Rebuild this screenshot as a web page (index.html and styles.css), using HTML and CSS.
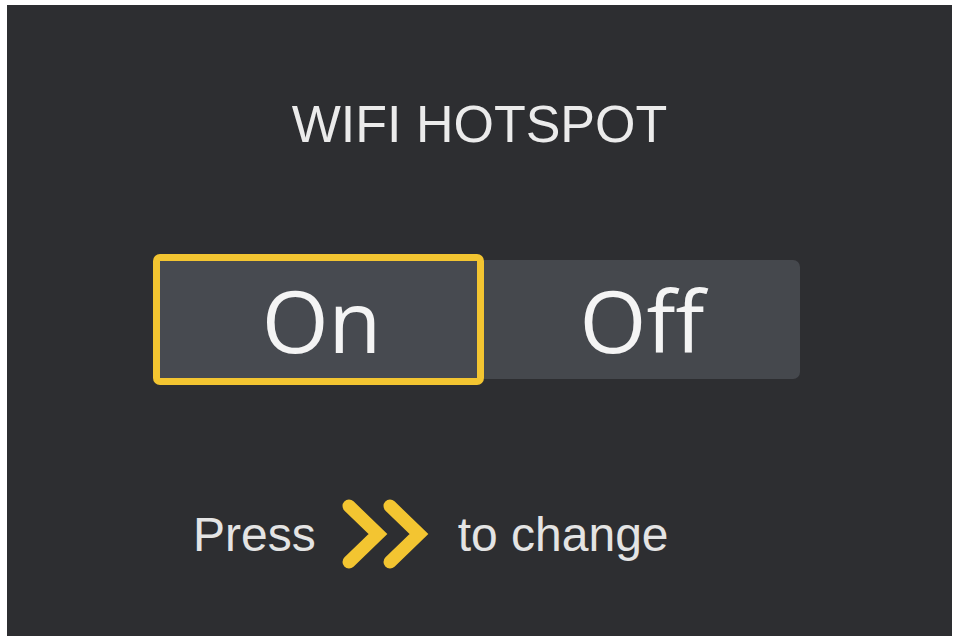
FILE: index.html
```html
<!DOCTYPE html>
<html lang="en">
<head>
<meta charset="utf-8">
<title>WIFI HOTSPOT</title>
<link rel="stylesheet" href="styles.css">
</head>
<body>
<main class="panel">
  <h1 class="title">WIFI HOTSPOT</h1>
  <div class="toggle-wrap">
    <div class="toggle">
      <div class="opt opt-on">On</div>
      <div class="opt opt-off">Off</div>
    </div>
  </div>
  <div class="hint">
    <span class="hint-text">Press</span>
    <svg class="chev" width="90" height="76" viewBox="0 0 90 76" aria-hidden="true">
      <path d="M9 9 L38 37 L9 65" fill="none" stroke="#f3c531" stroke-width="13" stroke-linecap="round" stroke-linejoin="miter"/>
      <path d="M50 9 L79 37 L50 65" fill="none" stroke="#f3c531" stroke-width="13" stroke-linecap="round" stroke-linejoin="miter"/>
    </svg>
    <span class="hint-text">to change</span>
  </div>
</main>
</body>
</html>
```
FILE: styles.css
```css
html, body {
  margin: 0;
  padding: 0;
  background: #ffffff;
}

body {
  width: 958px;
  height: 641px;
  overflow: hidden;
}

.panel {
  box-sizing: border-box;
  margin: 5px 0 0 7px;
  width: 945px;
  height: 631px;
  background: #2d2e31;
  padding-top: 89px;
  display: flex;
  flex-direction: column;
}

.title {
  margin: 0;
  font-family: "Liberation Sans", Arial, sans-serif;
  font-weight: 400;
  font-size: 52px;
  line-height: 60px;
  color: #ebebeb;
  text-align: center;
}

.toggle-wrap {
  margin-top: 100px;
  display: flex;
  justify-content: center;
  padding-right: 6px;
}

.toggle {
  display: flex;
  align-items: center;
}

.opt {
  box-sizing: border-box;
  display: flex;
  align-items: center;
  justify-content: center;
  font-family: "Open Sans", "Noto Sans", sans-serif;
  font-weight: 400;
  font-size: 86px;
  color: #f4f4f4;
}

.opt-on {
  width: 331px;
  height: 131px;
  border: 7px solid #f3c531;
  border-radius: 7px;
  background: #474a50;
  position: relative;
  z-index: 1;
  padding-left: 6px;
}

.opt-off {
  width: 316px;
  height: 119px;
  background: #45484d;
  border-radius: 0 7px 7px 0;
  padding-left: 0;
}

.hint {
  margin-top: 112px;
  height: 76px;
  display: flex;
  align-items: center;
  padding-left: 186px;
}

.hint-text {
  font-family: "Liberation Sans", Arial, sans-serif;
  font-size: 48px;
  line-height: 56px;
  color: #e4e4e4;
}

.chev {
  display: block;
  margin-left: 24px;
  margin-right: 28px;
}
```
